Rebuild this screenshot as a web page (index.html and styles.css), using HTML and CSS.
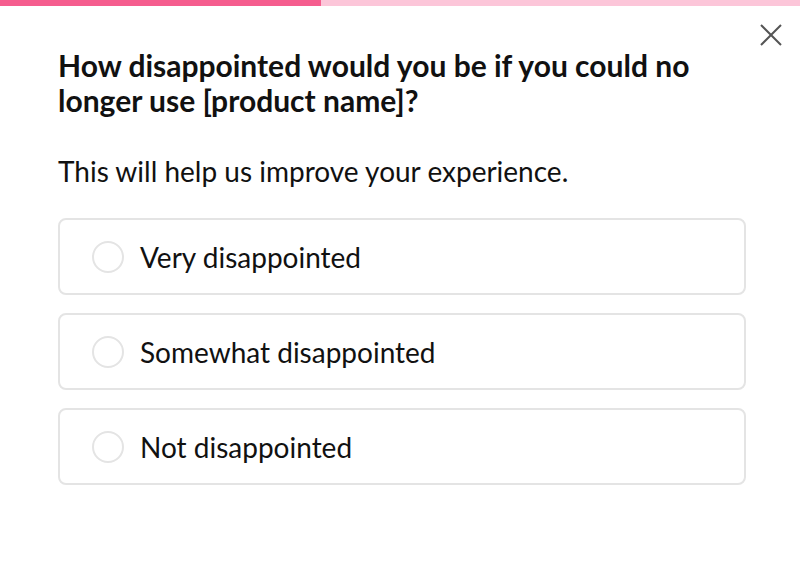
FILE: index.html
```html
<!DOCTYPE html>
<html>
<head>
<meta charset="utf-8">
<link rel="stylesheet" href="styles.css">
</head>
<body>
<div class="progress"><div class="progress-fill"></div></div>
<div class="survey">
  <button class="close" aria-label="Close">
    <svg width="24" height="24" viewBox="0 0 24 24"><path d="M2 2 L22 22 M22 2 L2 22" stroke="#555" stroke-width="2" fill="none"/></svg>
  </button>
  <h1 class="question">How disappointed would you be if you could no longer use [product name]?</h1>
  <p class="subtitle">This will help us improve your experience.</p>
  <div class="options">
    <label class="option"><span class="radio"></span><span class="label">Very disappointed</span></label>
    <label class="option"><span class="radio"></span><span class="label">Somewhat disappointed</span></label>
    <label class="option"><span class="radio"></span><span class="label">Not disappointed</span></label>
  </div>
</div>
</body>
</html>
```
FILE: styles.css
```css
html, body { margin: 0; padding: 0; background: #fff; }
body { font-family: Lato, "Noto Sans", sans-serif; color: #111; width: 800px; height: 564px; overflow: hidden; }
.progress { height: 6px; background: #fcc6d9; }
.progress-fill { width: 321px; height: 100%; background: #f55d8e; }
.survey { position: relative; padding: 42px 54px 0 58px; }
.close { position: absolute; top: 17px; right: 17px; border: 0; background: none; padding: 0; width: 24px; height: 24px; cursor: pointer; }
.close svg { display: block; }
.question { margin: 0; font-size: 30px; font-weight: 700; line-height: 35px; letter-spacing: 0; }
.subtitle { margin: 36px 0 0; font-size: 28px; line-height: 34px; }
.options { margin-top: 30px; display: flex; flex-direction: column; gap: 18px; }
.option { display: flex; align-items: center; height: 77px; box-sizing: border-box; border: 2px solid #e4e4e4; border-radius: 8px; padding-left: 32px; }
.radio { width: 32px; height: 32px; box-sizing: border-box; border: 2px solid #e4e4e4; border-radius: 50%; }
.label { margin-left: 16px; font-size: 28px; }
```
